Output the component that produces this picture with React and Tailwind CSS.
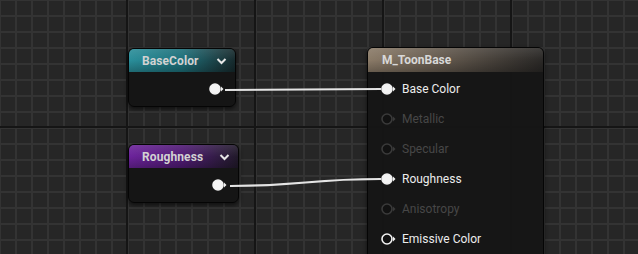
import React from 'react';

const Pin = ({ state = 'on' }) => {
    // state: on (filled white), off (dim outline), ring (white outline)
    const stroke = state === 'off' ? '#3a3a3a' : '#f2f2f2';
    const fill = state === 'on' ? '#f4f4f4' : '#121212';
    return (
        <svg width="16" height="12" viewBox="0 0 16 12" className="shrink-0">
            <circle cx="6" cy="6" r="5" fill={fill} stroke={stroke} strokeWidth="1.6" />
            <polygon points="12,3.6 14.5,6 12,8.4" fill={stroke} />
        </svg>
    );
};

const Chevron = () => (
    <svg width="11" height="8" viewBox="0 0 11 8">
        <polyline points="1.5,2 5.5,6 9.5,2" fill="none" stroke="#e6e6e6" strokeWidth="2" />
    </svg>
);

const ParamNode = ({ pos, title, header }) => (
    <div className={`absolute ${pos} h-[59px] rounded-[6px] border border-[#050505] bg-[#141414]/95 shadow-[0_2px_4px_rgba(0,0,0,0.6)] overflow-hidden`}>
        <div className={`relative h-[23px] flex items-center justify-between pl-[13px] pr-[8px] ${header}`}>
            <div className="absolute inset-0 bg-gradient-to-b from-white/10 via-transparent to-black/25" />
            <span className="relative text-[12px] font-bold text-[#d2d2d2] tracking-[0.1px]">{title}</span>
            <span className="relative"><Chevron /></span>
        </div>
        <div className="flex justify-end items-center h-[34px] pr-[10px] pb-[1px]">
            <Pin state="on" />
        </div>
    </div>
);

const inputs = [
    { label: 'Base Color', state: 'on' },
    { label: 'Metallic', state: 'off' },
    { label: 'Specular', state: 'off' },
    { label: 'Roughness', state: 'on' },
    { label: 'Anisotropy', state: 'off' },
    { label: 'Emissive Color', state: 'ring' },
];

const MaterialNode = () => (
    <div className="absolute left-[367px] top-[47px] w-[177px] h-[230px] rounded-[6px] border border-[#050505] bg-[#151515]/95 shadow-[0_2px_4px_rgba(0,0,0,0.6)] overflow-hidden">
        <div className="relative h-[24px] flex items-center pl-[14px] bg-gradient-to-r from-[#8b7b68] via-[#5c5349] to-[#2a2826]">
            <div className="absolute inset-0 bg-gradient-to-b from-white/10 via-transparent to-black/25" />
            <span className="relative text-[12px] font-bold text-[#d8d8d8]">M_ToonBase</span>
        </div>
        <div className="flex flex-col pt-[2px]">
            {inputs.map((item) => (
                <div key={item.label} className="h-[30px] flex items-center pl-[13px] gap-[5px]">
                    <Pin state={item.state} />
                    <span className={`text-[12px] ${item.state === 'off' ? 'text-[#474747]' : 'text-[#ececec]'}`}>
                        {item.label}
                    </span>
                </div>
            ))}
        </div>
    </div>
);

export default function App() {
    return (
        <div className="relative w-[638px] h-[254px] overflow-hidden bg-[#262626] font-['Roboto',sans-serif]">
            <svg className="absolute inset-0" width="638" height="254">
                <defs>
                    <pattern id="minor" x="15" y="15" width="16" height="16" patternUnits="userSpaceOnUse">
                        <rect x="0" y="0" width="2" height="16" fill="#333333" />
                        <rect x="0" y="0" width="16" height="2" fill="#333333" />
                    </pattern>
                    <pattern id="major" x="126" y="126" width="128" height="128" patternUnits="userSpaceOnUse">
                        <rect x="0" y="0" width="2" height="128" fill="#151515" />
                        <rect x="0" y="0" width="128" height="2" fill="#151515" />
                    </pattern>
                </defs>
                <rect width="638" height="254" fill="url(#minor)" />
                <rect width="638" height="254" fill="url(#major)" />
            </svg>

            <ParamNode
                pos="left-[128px] top-[48px] w-[108px]"
                title="BaseColor"
                header="bg-gradient-to-r from-[#2a8e9a] via-[#1c6f79] to-[#162a2d]"
            />
            <ParamNode
                pos="left-[128px] top-[144px] w-[111px]"
                title="Roughness"
                header="bg-gradient-to-r from-[#6c239b] via-[#4f1a73] to-[#21192a]"
            />
            <MaterialNode />

            <svg className="absolute inset-0 pointer-events-none" width="638" height="254">
                <path d="M225 90 C 300 90, 306 89, 381 89" fill="none" stroke="#e4e4e4" strokeWidth="2" />
                <path d="M230 186 C 305 186, 306 179, 381 179" fill="none" stroke="#e4e4e4" strokeWidth="2" />
            </svg>
        </div>
    );
}
